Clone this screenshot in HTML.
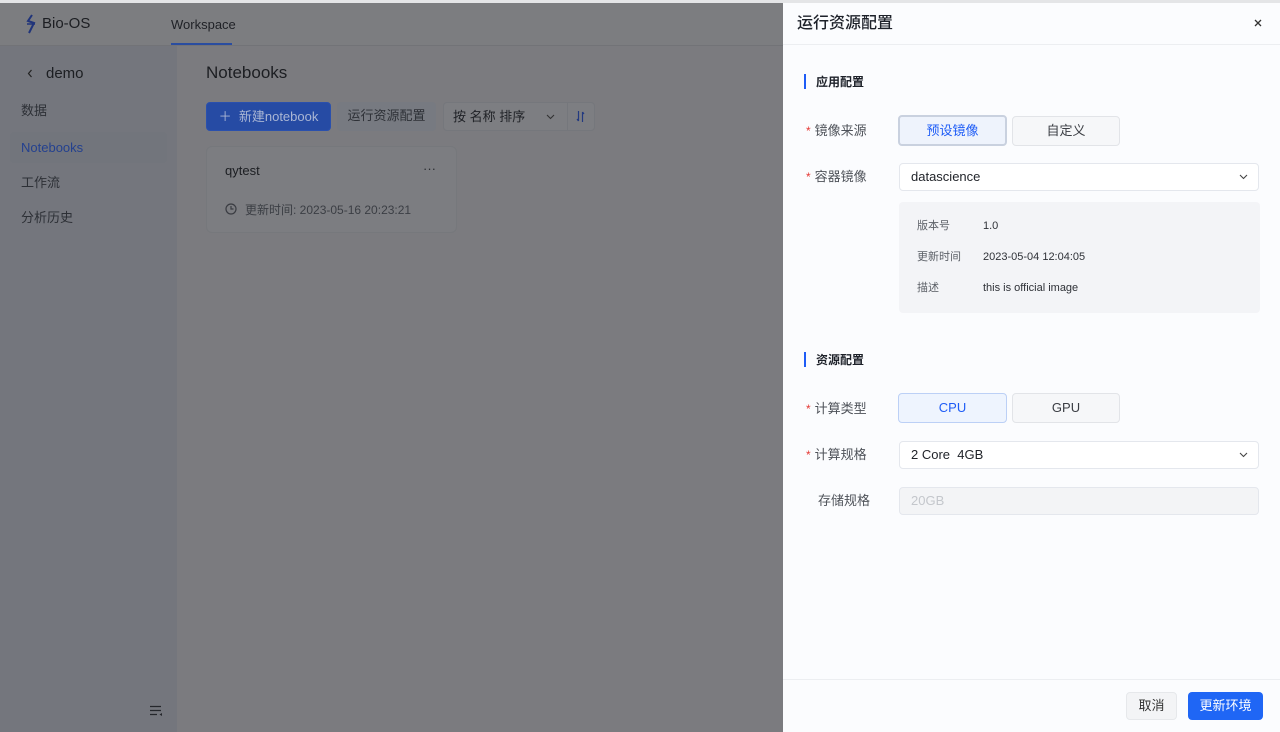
<!DOCTYPE html>
<html><head><meta charset="utf-8"><style>
*{box-sizing:border-box;margin:0;padding:0}
body{width:1280px;height:732px;overflow:hidden;position:relative;font-family:"Liberation Sans","Noto Sans CJK SC",sans-serif;background:#7b7b7f}
.a{position:absolute}
.topline{left:0;top:0;width:1280px;height:3px;background:#e4e5e7;z-index:5}
.hdr{left:0;top:0;width:783px;height:46px;background:#7c7d80;border-bottom:1px solid #727377}
.side{left:0;top:46px;width:177px;height:686px;background:#74767d}
.main{left:177px;top:46px;width:606px;height:686px;background:#7b7b7f}
.dr{left:783px;top:0;width:497px;height:732px;background:#fbfcfe}
.t{font-size:13px;color:#1f2228;white-space:nowrap;line-height:16px}
.lbl{font-size:13px;color:#4e5259}
.star{color:#e53935;font-size:12px;margin-right:4px}
.btn{border-radius:4px;text-align:center;font-size:13px;line-height:28px}
.sel{background:#fff;border:1px solid #e4e7ed;border-radius:4px;height:28px;font-size:13px;line-height:26px;padding-left:11px;color:#1f2228}
</style></head><body>
<div class="a topline"></div>
<div class="a hdr"></div>
<svg class="a" style="left:25px;top:14px" width="12" height="20" viewBox="0 0 12 20"><path d="M7 1 L3 7 L9 9 L4 19" stroke="#20347a" stroke-width="2" fill="none"/><path d="M2 10 L10 10" stroke="#20347a" stroke-width="1.5"/></svg>
<div class="a t" style="left:42px;top:16px;font-size:15px;color:#1c1e22">Bio-OS</div>
<div class="a t" style="left:171px;top:17px;color:#1f2126">Workspace</div>
<div class="a" style="left:171px;top:43px;width:61px;height:2px;background:#2a4da0"></div>
<div class="a side"></div>
<div class="a main"></div>
<svg class="a" style="left:27px;top:69px" width="6" height="9" viewBox="0 0 6 9"><path d="M4.5 1L1.5 4.5L4.5 8" stroke="#222" stroke-width="1.2" fill="none"/></svg>
<div class="a t" style="left:46px;top:66px;font-size:15px;color:#1c1e22">demo</div>
<div class="a t" style="left:21px;top:103px;color:#2d3036">数据</div>
<div class="a" style="left:10px;top:132px;width:157px;height:31px;background:#72757c;border-radius:4px"></div>
<div class="a t" style="left:21px;top:140px;color:#24418f">Notebooks</div>
<div class="a t" style="left:21px;top:175px;color:#2d3036">工作流</div>
<div class="a t" style="left:21px;top:210px;color:#2d3036">分析历史</div>
<svg class="a" style="left:149px;top:705px" width="14" height="12" viewBox="0 0 14 12"><path d="M1 1.5H12M1 5.5H12M1 9.5H8" stroke="#25272c" stroke-width="1.3"/><path d="M13 8 L10.5 9.5 L13 11Z" fill="#25272c"/></svg>
<div class="a t" style="left:206px;top:63px;font-size:17px;line-height:20px;color:#1c1e22">Notebooks</div>
<div class="a btn" style="left:206px;top:102px;width:125px;height:29px;background:#264ba4;color:#aab6d4;border:1px solid #2a50ad">＋&nbsp;&nbsp;新建notebook</div>
<div class="a btn" style="left:337px;top:102px;width:99px;height:29px;background:#777a81;color:#2e3137">运行资源配置</div>
<div class="a" style="left:443px;top:102px;width:152px;height:29px;border:1px solid #75777c;border-radius:4px;background:#7d7e82"></div>
<div class="a t" style="left:453px;top:109px;color:#1f2126">按 名称 排序</div>
<svg class="a" style="left:546px;top:114px" width="9" height="6" viewBox="0 0 9 6"><path d="M1 1L4.5 4.5L8 1" stroke="#333" stroke-width="1.1" fill="none"/></svg>
<div class="a" style="left:567px;top:103px;width:1px;height:27px;background:#75777c"></div>
<svg class="a" style="left:576px;top:110px" width="9" height="13" viewBox="0 0 9 13"><path d="M2.5 1V11M2.5 11L1 9M6.5 12V2M6.5 2L8 4" stroke="#233a80" stroke-width="1.2" fill="none"/></svg>
<div class="a" style="left:206px;top:146px;width:251px;height:87px;border:1px solid #76787c;border-radius:6px;background:#7c7d81"></div>
<div class="a t" style="left:225px;top:163px;color:#1c1e22">qytest</div>
<div class="a t" style="left:423px;top:161px;color:#2a2c30">···</div>
<svg class="a" style="left:225px;top:203px" width="12" height="12" viewBox="0 0 12 12"><circle cx="6" cy="6" r="5" stroke="#3a3c42" stroke-width="1.2" fill="none"/><path d="M6 3V6H8.5" stroke="#3a3c42" stroke-width="1.2" fill="none"/></svg>
<div class="a t" style="left:245px;top:202px;font-size:12px;color:#3b3e44">更新时间: 2023-05-16 20:23:21</div>

<div class="a dr"></div>
<div class="a" style="left:783px;top:44px;width:497px;height:1px;background:#eceef1"></div>
<div class="a t" style="left:797px;top:14px;font-size:16px;line-height:20px;color:#1d2129;font-weight:500">运行资源配置</div>
<svg class="a" style="left:1254px;top:19px" width="8" height="8" viewBox="0 0 8 8"><path d="M1 1L7 7M7 1L1 7" stroke="#333" stroke-width="1.3"/></svg>
<div class="a" style="left:804px;top:74px;width:2px;height:15px;background:#1e5cf6"></div>
<div class="a t" style="left:816px;top:74px;font-size:12px;font-weight:bold;color:#1d2129">应用配置</div>
<div class="a t" style="left:806px;top:123px"><span class="star">*</span><span class="lbl">镜像来源</span></div>
<div class="a btn" style="left:898px;top:115px;width:109px;height:31px;background:#eef3fc;border:2px solid #c9d1df;color:#1e5cf6;line-height:27px">预设镜像</div>
<div class="a btn" style="left:1012px;top:116px;width:108px;height:30px;background:#f6f7f9;border:1px solid #e2e4e8;color:#3b3e44">自定义</div>
<div class="a t" style="left:806px;top:169px"><span class="star">*</span><span class="lbl">容器镜像</span></div>
<div class="a sel" style="left:899px;top:163px;width:360px">datascience</div>
<svg class="a" style="left:1239px;top:174px" width="9" height="6" viewBox="0 0 9 6"><path d="M1 1L4.5 4.5L8 1" stroke="#444" stroke-width="1.1" fill="none"/></svg>
<div class="a" style="left:899px;top:202px;width:361px;height:111px;background:#f3f4f7;border-radius:4px"></div>
<div class="a t" style="left:917px;top:218px;font-size:11px;color:#5d6168">版本号</div>
<div class="a t" style="left:983px;top:218px;font-size:11px;color:#2e3137">1.0</div>
<div class="a t" style="left:917px;top:249px;font-size:11px;color:#5d6168">更新时间</div>
<div class="a t" style="left:983px;top:249px;font-size:11px;color:#2e3137">2023-05-04 12:04:05</div>
<div class="a t" style="left:917px;top:280px;font-size:11px;color:#5d6168">描述</div>
<div class="a t" style="left:983px;top:280px;font-size:11px;color:#2e3137">this is official image</div>
<div class="a" style="left:804px;top:352px;width:2px;height:15px;background:#1e5cf6"></div>
<div class="a t" style="left:816px;top:352px;font-size:12px;font-weight:bold;color:#1d2129">资源配置</div>
<div class="a t" style="left:806px;top:401px"><span class="star">*</span><span class="lbl">计算类型</span></div>
<div class="a btn" style="left:898px;top:393px;width:109px;height:30px;background:#eef4fe;border:1px solid #bcd0f6;color:#1e5cf6">CPU</div>
<div class="a btn" style="left:1012px;top:393px;width:108px;height:30px;background:#f6f7f9;border:1px solid #e2e4e8;color:#3b3e44">GPU</div>
<div class="a t" style="left:806px;top:447px"><span class="star">*</span><span class="lbl">计算规格</span></div>
<div class="a sel" style="left:899px;top:441px;width:360px">2 Core&nbsp;&nbsp;4GB</div>
<svg class="a" style="left:1239px;top:452px" width="9" height="6" viewBox="0 0 9 6"><path d="M1 1L4.5 4.5L8 1" stroke="#444" stroke-width="1.1" fill="none"/></svg>
<div class="a t" style="left:818px;top:493px"><span class="lbl">存储规格</span></div>
<div class="a sel" style="left:899px;top:487px;width:360px;background:#f3f4f6;color:#c4c7cc">20GB</div>
<div class="a" style="left:783px;top:679px;width:497px;height:1px;background:#eceef1"></div>
<div class="a btn" style="left:1126px;top:692px;width:51px;height:28px;background:#f3f4f6;border:1px solid #e6e8eb;color:#333;line-height:26px">取消</div>
<div class="a btn" style="left:1188px;top:692px;width:75px;height:28px;background:#1f66f5;color:#fff;border-radius:4px">更新环境</div>
</body></html>
